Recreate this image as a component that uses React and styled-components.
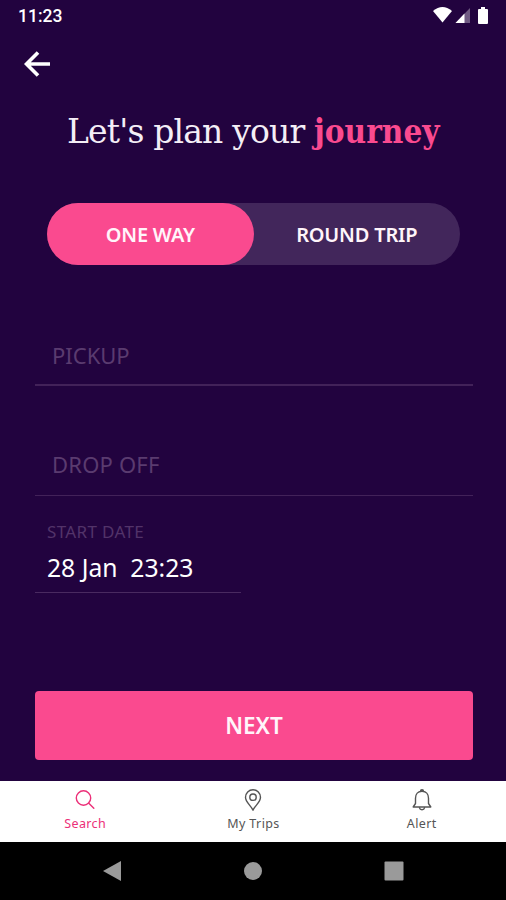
import React, { useState } from 'react';
import styled, { createGlobalStyle } from 'styled-components';

const GlobalStyle = createGlobalStyle`
  * {
    box-sizing: border-box;
  }

  body {
    margin: 0;
    background-color: #000;
    font-family: 'Noto Sans', 'Open Sans', sans-serif;
  }

  button {
    font-family: inherit;
    border: none;
    padding: 0;
    cursor: pointer;
  }
`;

const Screen = styled.div`
  display: flex;
  flex-direction: column;
  width: 506px;
  height: 900px;
  overflow: hidden;
  background-color: #22033f;
`;

const StatusBar = styled.div`
  display: flex;
  align-items: center;
  justify-content: space-between;
  height: 32px;
  padding: 0 15px 0 18px;
`;

const Clock = styled.span`
  font-family: Roboto, sans-serif;
  font-size: 17.5px;
  font-weight: 500;
  line-height: 32px;
  color: #fff;
`;

const StatusIcons = styled.svg`
  display: block;
  width: 60px;
  height: 32px;
`;

const Header = styled.header`
  display: flex;
  align-items: center;
  height: 64px;
  padding-left: 24px;
`;

const BackButton = styled.button`
  display: flex;
  background: none;
`;

const Title = styled.h1`
  display: flex;
  align-items: baseline;
  height: 72px;
  margin: 0;
  padding-left: 67px;
  font-family: 'Roboto Slab', 'DejaVu Serif', serif;
  font-size: 33px;
  font-weight: 300;
  line-height: 72px;
  letter-spacing: -0.83px;
  white-space: pre;
  color: #f4eef6;
`;

const Accent = styled.strong`
  font-family: 'Roboto Slab', 'DejaVu Serif Condensed', 'DejaVu Serif', serif;
  font-stretch: condensed;
  font-weight: 700;
  letter-spacing: 0;
  color: #fa4a8f;
`;

const Toggle = styled.div`
  display: flex;
  width: 413px;
  height: 62px;
  margin: 35px 0 0 47px;
  border-radius: 31px;
  background-color: #42265b;
`;

const ToggleOption = styled.button`
  flex: 1;
  padding-top: 2px;
  border-radius: 31px;
  background-color: ${({ $active }) => ($active ? '#fa4a8f' : 'transparent')};
  font-size: 20px;
  font-weight: 600;
  line-height: 60px;
  letter-spacing: -0.2px;
  color: #fff5fa;
`;

const Form = styled.div`
  flex: 1;
  display: flex;
  flex-direction: column;
  padding: 60px 33px 0 35px;
`;

const Field = styled.div`
  height: ${({ $height }) => $height}px;
  padding: 15px 0 0 17px;
  border-bottom: ${({ $line }) => $line}px solid #422259;
  font-size: 22px;
  line-height: 30px;
  letter-spacing: ${({ $spacing }) => $spacing || 0}px;
  color: #5a3b6f;

  & + & {
    margin-top: 48px;
  }
`;

const DateField = styled.div`
  width: 206px;
  height: 97px;
  padding: 24px 0 0 12px;
  border-bottom: 1px solid #492a60;
`;

const DateLabel = styled.div`
  font-size: 17px;
  line-height: 24px;
  letter-spacing: 0.35px;
  color: #523369;
`;

const DateValue = styled.div`
  margin-top: 7px;
  font-size: 24.7px;
  line-height: 34px;
  white-space: pre;
  color: #fff;
`;

const NextButton = styled.button`
  height: 69px;
  margin-top: 98px;
  border-radius: 4px;
  background-color: #fa4a8f;
  font-size: 22.5px;
  font-weight: 600;
  color: #fff5fa;
`;

const TabBar = styled.nav`
  display: flex;
  height: 61px;
  padding-left: 1px;
  background-color: #fff;
`;

const Tab = styled.button`
  flex: 1;
  display: flex;
  flex-direction: column;
  align-items: center;
  padding-top: 7px;
  background: none;
  font-size: 12.5px;
  line-height: 18px;
  letter-spacing: 0.4px;
  color: ${({ $active }) => ($active ? '#ec2f78' : '#555')};

  svg {
    display: block;
    margin-bottom: 2px;
  }
`;

const SystemNav = styled.div`
  display: flex;
  align-items: center;
  justify-content: space-between;
  height: 58px;
  padding: 0 102px;
  background-color: #000;
`;

const TabIcon = ({ children }) => (
  <svg width="26" height="25" viewBox="0 0 26 25" fill="none" stroke="currentColor" strokeWidth="1.4" strokeLinecap="round" strokeLinejoin="round">
    {children}
  </svg>
);

const tabs = [
  {
    name: 'Search',
    icon: (
      <>
        <circle cx="11.5" cy="10" r="7.2" />
        <path d="M16.8 15.3l5 5" />
      </>
    ),
  },
  {
    name: 'My Trips',
    icon: (
      <>
        <path d="M13 22.2C10.8 17.2 5.5 14.2 5.5 9.2a7.5 7.5 0 0 1 15 0c0 5-5.3 8-7.5 13z" />
        <circle cx="13" cy="9.2" r="3.2" />
      </>
    ),
  },
  {
    name: 'Alert',
    icon: (
      <>
        <path d="M11.5 3.2a1.5 1.5 0 0 1 3 0M6.5 15.5V10.2c0-4 2.5-7 6.5-7s6.500 3 6.500 7v5.300l2.300 3.500H4.200z" />
        <path d="M10.5 19.8c.5 2.500 4.500 2.500 5 0" />
      </>
    ),
  },
];

const App = () => {
  const [trip, setTrip] = useState('ONE WAY');
  const [tab, setTab] = useState('Search');

  return (
    <>
      <GlobalStyle />
      <Screen>
        <StatusBar>
          <Clock>11:23</Clock>
          <StatusIcons viewBox="0 0 60 32" fill="#fff">
            <path d="M2 11Q11.5 3 21 11L11.5 22.5z" />
            <path d="M24.5 23L39 8v15z" fillOpacity="0.35" />
            <path d="M24.5 23L33.5 13.5V23z" />
            <path d="M50 7h4v2h2a1 1 0 0 1 1 1v13a1 1 0 0 1-1 1h-8a1 1 0 0 1-1-1V10a1 1 0 0 1 1-1h2z" />
          </StatusIcons>
        </StatusBar>
        <Header>
          <BackButton aria-label="Back">
            <svg width="27" height="26" viewBox="0 0 27 26" fill="none" stroke="#fff" strokeWidth="3.6">
              <path d="M26 13H4M14 1.5L2.5 13 14 24.5" />
            </svg>
          </BackButton>
        </Header>
        <Title>
          <span>Let's plan your </span>
          <Accent>journey</Accent>
        </Title>
        <Toggle>
          {['ONE WAY', 'ROUND TRIP'].map((name) => (
            <ToggleOption key={name} $active={trip === name} onClick={() => setTrip(name)}>
              {name}
            </ToggleOption>
          ))}
        </Toggle>
        <Form>
          <Field $height={61} $line={2}>PICKUP</Field>
          <Field $height={62} $line={1} $spacing={0.2}>DROP OFF</Field>
          <DateField>
            <DateLabel>START DATE</DateLabel>
            <DateValue>28 Jan  23:23</DateValue>
          </DateField>
          <NextButton>NEXT</NextButton>
        </Form>
        <TabBar>
          {tabs.map(({ name, icon }) => (
            <Tab key={name} $active={tab === name} onClick={() => setTab(name)}>
              <TabIcon>{icon}</TabIcon>
              {name}
            </Tab>
          ))}
        </TabBar>
        <SystemNav>
          <svg width="20" height="22" viewBox="0 0 20 22" fill="#9a9a9a">
            <path d="M1 11L19 1v20z" />
          </svg>
          <svg width="20" height="20" viewBox="0 0 20 20" fill="#9a9a9a">
            <circle cx="10" cy="10" r="9" />
          </svg>
          <svg width="20" height="20" viewBox="0 0 20 20" fill="#9a9a9a">
            <rect x="0.5" y="0.5" width="19" height="19" rx="1" />
          </svg>
        </SystemNav>
      </Screen>
    </>
  );
};

export default App;
